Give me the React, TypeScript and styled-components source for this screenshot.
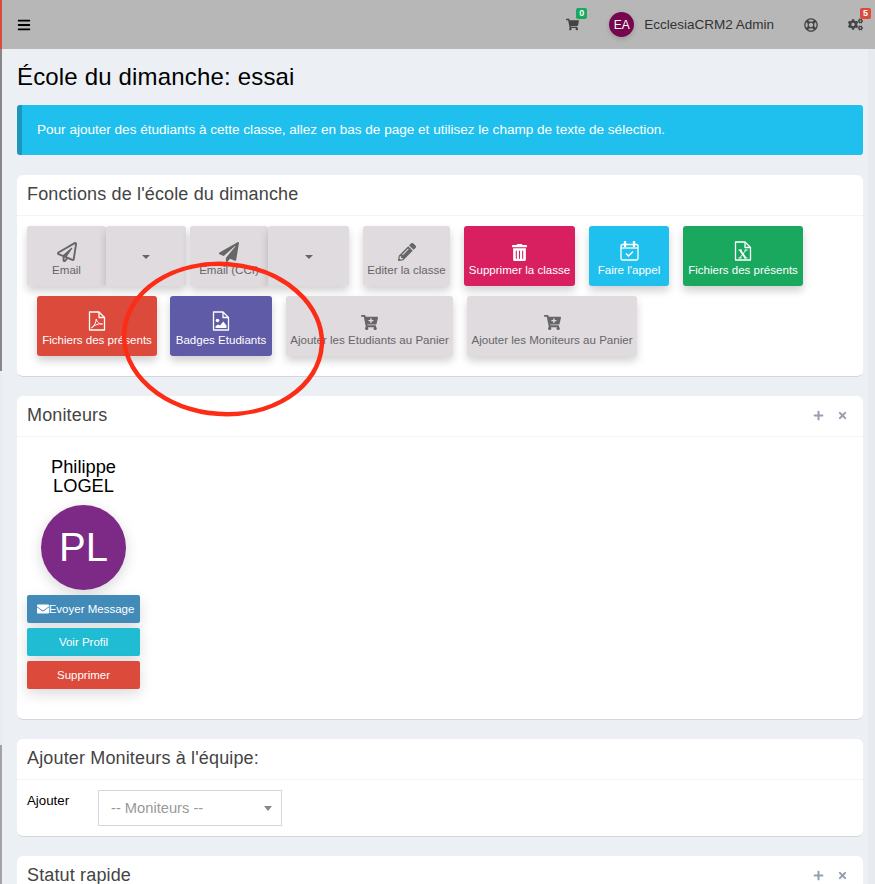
import React from 'react';
import styled, { createGlobalStyle } from 'styled-components';
import {
  FaBars,
  FaShoppingCart,
  FaRegLifeRing,
  FaCogs,
  FaRegPaperPlane,
  FaPaperPlane,
  FaPencilAlt,
  FaTrashAlt,
  FaCartPlus,
  FaEnvelope,
  FaPlus,
  FaTimes,
} from 'react-icons/fa';

const GlobalStyle = createGlobalStyle`
  html, body {
    margin: 0;
    padding: 0;
    height: 884px;
    overflow: hidden;
    background: #ecf0f5;
    font-family: "Liberation Sans", Arial, sans-serif;
  }
  * { box-sizing: border-box; }
`;

const Shell = styled.div`
  position: relative;
  display: flex;
  width: 875px;
  height: 884px;
  overflow: hidden;
`;

const EdgeStrip = styled.div`
  display: flex;
  flex-direction: column;
  flex: 0 0 2px;
`;

const EdgePart = styled.div<{ $h: number; $c: string }>`
  height: ${p => p.$h}px;
  background: ${p => p.$c};
`;

const Main = styled.div`
  flex: 1;
  min-width: 0;
`;

const TopBar = styled.header`
  height: 49px;
  background: #b7b7b7;
  display: flex;
  align-items: center;
  padding: 0 12px 0 15px;
  color: #333;
`;

const Burger = styled.span`
  display: flex;
  color: #000;
  font-size: 14px;
  margin-right: auto;
`;

const NavItem = styled.span`
  position: relative;
  display: flex;
  align-items: center;
  color: #444;
`;

const CartItem = styled(NavItem)`
  font-size: 13px;
  margin-right: 30px;
`;

const HelpItem = styled(NavItem)`
  font-size: 14px;
  margin-right: 30px;
`;

const CogItem = styled(NavItem)`
  font-size: 15px;
`;

const NavBadge = styled.span<{ $c: string; $top: number; $left: number }>`
  position: absolute;
  top: ${p => p.$top}px;
  left: ${p => p.$left}px;
  min-width: 11px;
  height: 11px;
  line-height: 11px;
  padding: 0 2px;
  border-radius: 2px;
  background: ${p => p.$c};
  color: #fff;
  font-size: 9px;
  font-weight: 700;
  text-align: center;
`;

const UserItem = styled.span`
  display: flex;
  align-items: center;
  margin-right: 30px;
  font-size: 13.5px;
  color: #333;
`;

const UserAvatar = styled.span`
  width: 25px;
  height: 25px;
  border-radius: 50%;
  background: #76074f;
  color: #fff;
  display: flex;
  align-items: center;
  justify-content: center;
  font-size: 12px;
  margin-right: 10px;
  box-shadow: 0 2px 5px rgba(0, 0, 0, 0.16);
`;

const Content = styled.main`
  height: 835px;
  padding: 0 12px 0 15px;
  background: linear-gradient(to right, #ecf0f5 calc(100% - 7px), #e7eaef 0);
`;

const Title = styled.h1`
  margin: 0;
  padding-top: 15px;
  height: 56px;
  font-size: 24px;
  line-height: 26px;
  font-weight: 400;
  letter-spacing: 0.17px;
  color: #000;
`;

const Alert = styled.div`
  height: 50px;
  background: #1fc0ee;
  border-left: 5px solid #1a97ba;
  border-radius: 3px;
  color: #fff;
  font-size: 13.55px;
  line-height: 50px;
  padding-left: 15px;
  margin-bottom: 20px;
`;

const Card = styled.section<{ $h: number }>`
  height: ${p => p.$h}px;
  background: #fff;
  border-radius: 6px;
  border-bottom: 1px solid #d2d6de;
  margin-bottom: 19px;
`;

const CardHead = styled.div`
  height: 41px;
  display: flex;
  align-items: center;
  justify-content: space-between;
  padding: 0 10px 2px;
  border-bottom: 1px solid #f4f4f4;
`;

const CardTitle = styled.h3`
  margin: 0;
  font-size: 18px;
  font-weight: 400;
  letter-spacing: 0.15px;
  color: #444;
`;

const CardTools = styled.span`
  display: flex;
  align-items: center;
  gap: 13px;
  color: #97a0b3;
  font-size: 11px;
  padding-right: 5px;
`;

const ButtonRows = styled.div`
  padding: 10px 10px 0;
  display: flex;
  flex-direction: column;
  gap: 10px;
`;

const ButtonRow = styled.div`
  display: flex;
  gap: 4px;
`;

const tones = {
  grey: { bg: '#dfdbde', fg: '#666' },
  pink: { bg: '#d81f5f', fg: '#fff' },
  sky: { bg: '#1fc0ee', fg: '#fff' },
  green: { bg: '#19a85e', fg: '#fff' },
  red: { bg: '#dc4a3c', fg: '#fff' },
  purple: { bg: '#5f5ba6', fg: '#fff' },
};

const AppButton = styled.button<{ $tone: keyof typeof tones; $w: number; $ml?: number }>`
  width: ${p => p.$w}px;
  height: 60px;
  margin: 0 0 0 ${p => p.$ml ?? 10}px;
  padding: 15px 0 0;
  border: 0;
  border-radius: 3px;
  background: ${p => tones[p.$tone].bg};
  color: ${p => tones[p.$tone].fg};
  font-family: inherit;
  font-size: 11.55px;
  display: flex;
  flex-direction: column;
  align-items: center;
  justify-content: flex-start;
  box-shadow: 0 5px 8px rgba(0, 0, 0, 0.18);
  white-space: nowrap;
`;

const AppIcon = styled.span<{ $size?: number }>`
  display: flex;
  align-items: ${p => (p.$size ? 'center' : 'flex-start')};
  justify-content: center;
  height: 22px;
  font-size: ${p => p.$size ?? 20}px;
`;

const AppLabel = styled.span`
  line-height: 14px;
`;

const SplitGroup = styled.div`
  display: flex;
`;

const Caret = styled.i`
  display: block;
  width: 0;
  height: 0;
  margin-top: 14px;
  border-left: 4px solid transparent;
  border-right: 4px solid transparent;
  border-top: 4px solid #666;
`;

const CardBody = styled.div`
  padding: 10px;
`;

const Teacher = styled.div`
  width: 113px;
  display: flex;
  flex-direction: column;
  align-items: center;
`;

const TeacherName = styled.div`
  font-size: 18.3px;
  line-height: 19px;
  color: #000;
  text-align: center;
  padding-top: 10px;
  margin-bottom: 10px;
`;

const TeacherAvatar = styled.div`
  width: 85px;
  height: 85px;
  border-radius: 50%;
  background: #7d2a86;
  color: #fff;
  display: flex;
  align-items: center;
  justify-content: center;
  font-size: 40px;
  margin-bottom: 5px;
  box-shadow: 0 4px 14px rgba(0, 0, 0, 0.16);
`;

const SmallButton = styled.button<{ $c: string }>`
  width: 113px;
  height: 28px;
  margin: 0 0 5px;
  border: 0;
  padding: 0;
  border-radius: 2px;
  background: ${p => p.$c};
  color: #fff;
  font-family: inherit;
  font-size: 11.5px;
  display: flex;
  align-items: center;
  justify-content: center;
  box-shadow: 0 5px 14px rgba(0, 0, 0, 0.14);
  white-space: nowrap;
  svg {
    font-size: 12px;
  }
`;

const MessageButton = styled(SmallButton)`
  padding-left: 4px;
`;

const AddRow = styled.div`
  display: flex;
  align-items: flex-start;
  padding: 10px;
`;

const AddLabel = styled.label`
  width: 71px;
  font-size: 13.3px;
  line-height: 21px;
  color: #000;
`;

const FakeSelect = styled.div`
  width: 184px;
  height: 36px;
  border: 1px solid #d2d6de;
  display: flex;
  align-items: center;
  justify-content: space-between;
  padding: 0 9px 0 12px;
  color: #999;
  font-size: 14.7px;
`;

const SelectCaret = styled.i`
  width: 0;
  height: 0;
  border-left: 4px solid transparent;
  border-right: 4px solid transparent;
  border-top: 5px solid #888;
`;

const Annotation = styled.svg`
  position: absolute;
  left: 115px;
  top: 255px;
  pointer-events: none;
`;

const FileIcon: React.FC<{ children: React.ReactNode }> = ({ children }) => (
  <svg width="18" height="20" viewBox="0 0 18 20" fill="none" stroke="currentColor" strokeWidth="1.3">
    <path d="M1.5 1h9.5l5.5 5.5V19h-15z" strokeLinejoin="round" />
    <path d="M11 1v5.5h5.5" strokeLinejoin="round" />
    {children}
  </svg>
);

const ExcelIcon = () => (
  <FileIcon>
    <path d="M6 9l5.5 8" strokeWidth="2" />
    <path d="M12 9l-6.2 8" strokeWidth="1" />
    <path d="M4.5 9h3.5M10.5 9h3M4.5 17h3M10 17h3.5" strokeWidth="1" />
  </FileIcon>
);

const PdfIcon = () => (
  <FileIcon>
    <path d="M3.5 17c2.5-1.5 4.5-5.5 4.8-9 .3 3 3.5 5.5 6.2 5-3-.6-8 .5-11 4z" strokeWidth="1" strokeLinejoin="round" />
  </FileIcon>
);

const ImageIcon = () => (
  <FileIcon>
    <circle cx="5.5" cy="9.5" r="1.8" fill="currentColor" stroke="none" />
    <path d="M3.5 17v-1.8l2.5-1.700 2 1 3.300-4 3.200 4v2.500z" fill="currentColor" stroke="none" />
  </FileIcon>
);

const CalendarIcon = () => (
  <svg width="19" height="20" viewBox="0 0 19 20" fill="none" stroke="currentColor" strokeWidth="1.3">
    <rect x="1" y="3.5" width="17" height="15.5" rx="1.5" />
    <path d="M1 7h17" />
    <path d="M5 1v4M14 1v4" strokeWidth="2.4" strokeLinecap="round" />
    <path d="M6 12.5l2.5 2.5 4.5-4.5" strokeWidth="1.5" />
  </svg>
);

export default function App() {
  return (
    <>
      <GlobalStyle />
      <Shell>
        <EdgeStrip>
          <EdgePart $h={49} $c="#dc4a3c" />
          <EdgePart $h={322} $c="#8a868a" />
          <EdgePart $h={374} $c="#ecebf3" />
          <EdgePart $h={139} $c="#a5a1a3" />
        </EdgeStrip>
        <Main>
          <TopBar>
            <Burger><FaBars /></Burger>
            <CartItem>
              <FaShoppingCart />
              <NavBadge $c="#19a85e" $top={-10} $left={10}>0</NavBadge>
            </CartItem>
            <UserItem>
              <UserAvatar>EA</UserAvatar>
              EcclesiaCRM2 Admin
            </UserItem>
            <HelpItem><FaRegLifeRing /></HelpItem>
            <CogItem>
              <FaCogs />
              <NavBadge $c="#dc4a3c" $top={-9} $left={12}>5</NavBadge>
            </CogItem>
          </TopBar>
          <Content>
            <Title>École du dimanche: essai</Title>
            <Alert>Pour ajouter des étudiants à cette classe, allez en bas de page et utilisez le champ de texte de sélection.</Alert>

            <Card $h={202}>
              <CardHead>
                <CardTitle>Fonctions de l'école du dimanche</CardTitle>
              </CardHead>
              <ButtonRows>
                <ButtonRow>
                  <SplitGroup>
                    <AppButton $tone="grey" $w={79} $ml={0}><AppIcon $size={20}><FaRegPaperPlane /></AppIcon><AppLabel>Email</AppLabel></AppButton>
                    <AppButton $tone="grey" $w={80} $ml={0}><Caret /></AppButton>
                  </SplitGroup>
                  <SplitGroup>
                    <AppButton $tone="grey" $w={78} $ml={0}><AppIcon $size={20}><FaPaperPlane /></AppIcon><AppLabel>Email (CCI)</AppLabel></AppButton>
                    <AppButton $tone="grey" $w={81} $ml={0}><Caret /></AppButton>
                  </SplitGroup>
                  <AppButton $tone="grey" $w={87}><AppIcon $size={18}><FaPencilAlt /></AppIcon><AppLabel>Editer la classe</AppLabel></AppButton>
                  <AppButton $tone="pink" $w={111}><AppIcon $size={17}><FaTrashAlt /></AppIcon><AppLabel>Supprimer la classe</AppLabel></AppButton>
                  <AppButton $tone="sky" $w={80}><AppIcon><CalendarIcon /></AppIcon><AppLabel>Faire l'appel</AppLabel></AppButton>
                  <AppButton $tone="green" $w={120}><AppIcon><ExcelIcon /></AppIcon><AppLabel>Fichiers des présents</AppLabel></AppButton>
                </ButtonRow>
                <ButtonRow>
                  <AppButton $tone="red" $w={120}><AppIcon><PdfIcon /></AppIcon><AppLabel>Fichiers des présents</AppLabel></AppButton>
                  <AppButton $tone="purple" $w={102} $ml={9}><AppIcon><ImageIcon /></AppIcon><AppLabel>Badges Etudiants</AppLabel></AppButton>
                  <AppButton $tone="grey" $w={167}><AppIcon $size={17}><FaCartPlus /></AppIcon><AppLabel>Ajouter les Etudiants au Panier</AppLabel></AppButton>
                  <AppButton $tone="grey" $w={170}><AppIcon $size={17}><FaCartPlus /></AppIcon><AppLabel>Ajouter les Moniteurs au Panier</AppLabel></AppButton>
                </ButtonRow>
              </ButtonRows>
            </Card>

            <Card $h={324}>
              <CardHead>
                <CardTitle>Moniteurs</CardTitle>
                <CardTools><FaPlus /><FaTimes /></CardTools>
              </CardHead>
              <CardBody>
                <Teacher>
                  <TeacherName>Philippe<br />LOGEL</TeacherName>
                  <TeacherAvatar>PL</TeacherAvatar>
                  <MessageButton $c="#428bb9"><FaEnvelope />Evoyer Message</MessageButton>
                  <SmallButton $c="#1fbcd3">Voir Profil</SmallButton>
                  <SmallButton $c="#dc4a3c">Supprimer</SmallButton>
                </Teacher>
              </CardBody>
            </Card>

            <Card $h={98}>
              <CardHead>
                <CardTitle>Ajouter Moniteurs à l'équipe:</CardTitle>
              </CardHead>
              <AddRow>
                <AddLabel>Ajouter</AddLabel>
                <FakeSelect>-- Moniteurs --<SelectCaret /></FakeSelect>
              </AddRow>
            </Card>

            <Card $h={60}>
              <CardHead>
                <CardTitle>Statut rapide</CardTitle>
                <CardTools><FaPlus /><FaTimes /></CardTools>
              </CardHead>
            </Card>
          </Content>
        </Main>
        <Annotation width="220" height="170" viewBox="0 0 220 170">
          <ellipse cx="108" cy="84" rx="99" ry="75" fill="none" stroke="#fb2d17" strokeWidth="4.5" transform="rotate(4 108 84)" />
        </Annotation>
      </Shell>
    </>
  );
}
